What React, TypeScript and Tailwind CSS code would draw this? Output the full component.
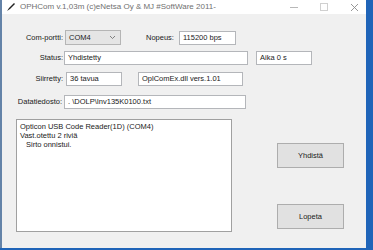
import React from 'react';

const font = { fontFamily: '"Liberation Sans", Arial, sans-serif' };

const Field: React.FC<{ w: string; children?: React.ReactNode; extra?: string }> = ({ w, children, extra }) => (
    <div className={`${w} h-[14px] bg-white border border-[#b4b6ba] pl-[3px] flex items-center text-[7.5px] text-[#1a1a1a] whitespace-nowrap overflow-hidden ${extra ?? ''}`}>
        {children}
    </div>
);

const App: React.FC = () => {
    return (
        <div className="w-[373px] h-[250px] bg-[#1f64b8] flex overflow-hidden" style={font}>
            <div className="w-[366px] h-[248px] bg-[#f0f0f0] border-l-[2px] border-[#6483a8] flex flex-col">
                {/* title bar */}
                <div className="h-[14px] bg-white flex items-center pl-[4px] pr-[7px] text-[8px] text-[#707070]">
                    <svg width="10" height="10" viewBox="0 0 10 10" className="mr-[4px]">
                        <path d="M1 9 L3 6 L8 1 L9 2 L4 7 Z" fill="#222" />
                    </svg>
                    <span>OPHCom v.1,03m (c)eNetsa Oy &amp; MJ #SoftWare 2011-</span>
                    <div className="ml-auto flex items-center gap-[22px]">
                        <div className="w-[8px] h-px bg-[#b8b8b8]" />
                        <div className="w-[8px] h-[8px] border border-[#d0d0d0]" />
                        <svg width="9" height="9" viewBox="0 0 9 9">
                            <path d="M1 1 L8 8 M8 1 L1 8" stroke="#8c8c8c" strokeWidth="0.9" />
                        </svg>
                    </div>
                </div>

                {/* form rows */}
                <div className="flex flex-col text-[7.5px] text-[#1a1a1a]">
                    <div className="flex items-center mt-[16px]">
                        <div className="w-[61px] text-right">Com-portti:</div>
                        <div className="ml-[2px] w-[56px] h-[15px] bg-[#e5e5e5] border border-[#b5b5b5] flex items-center pl-[3px] pr-[4px]">
                            <span>COM4</span>
                            <svg width="7" height="5" viewBox="0 0 7 5" className="ml-auto">
                                <path d="M1 1 L3.5 3.5 L6 1" stroke="#666" strokeWidth="0.8" fill="none" />
                            </svg>
                        </div>
                        <div className="ml-[25px]">Nopeus:</div>
                        <Field w="w-[57px]" extra="ml-[5px]">115200 bps</Field>
                    </div>

                    <div className="flex items-center mt-[6px]">
                        <div className="w-[61px] text-right">Status:</div>
                        <Field w="w-[184px]" extra="ml-[1px]">Yhdistetty</Field>
                        <Field w="w-[56px]" extra="ml-[8px]">Aika 0 s</Field>
                    </div>

                    <div className="flex items-center mt-[7px]">
                        <div className="w-[61px] text-right">Siirretty:</div>
                        <Field w="w-[56px]" extra="ml-[3px]">36 tavua</Field>
                        <Field w="w-[105px]" extra="ml-[16px]">OplComEx.dll vers.1.01</Field>
                    </div>

                    <div className="flex items-center mt-[9px]">
                        <div className="w-[60px] text-right">Datatiedosto:</div>
                        <Field w="w-[182px]" extra="ml-[2px]">. \DOLP\Inv135K0100.txt</Field>
                    </div>
                </div>

                {/* log + buttons */}
                <div className="flex mt-[10px]">
                    <div className="ml-[14px] w-[216px] h-[113px] bg-white border border-[#a0a0a0] pl-[3px] pt-[2px] text-[7.5px] leading-[9px] text-[#1a1a1a]">
                        <div>Opticon USB Code Reader(1D) (COM4)</div>
                        <div>Vast.otettu 2 riviä</div>
                        <div className="pl-[6px]">Sirto onnistui.</div>
                    </div>
                    <div className="ml-[45px] flex flex-col">
                        <button className="mt-[24px] w-[67px] h-[25px] bg-[#e1e1e1] border border-[#adadad] text-[7.5px] text-[#1a1a1a]">Yhdistä</button>
                        <button className="mt-[36px] w-[67px] h-[25px] bg-[#e1e1e1] border border-[#adadad] text-[7.5px] text-[#1a1a1a]">Lopeta</button>
                    </div>
                </div>
            </div>
        </div>
    );
};

export default App;
